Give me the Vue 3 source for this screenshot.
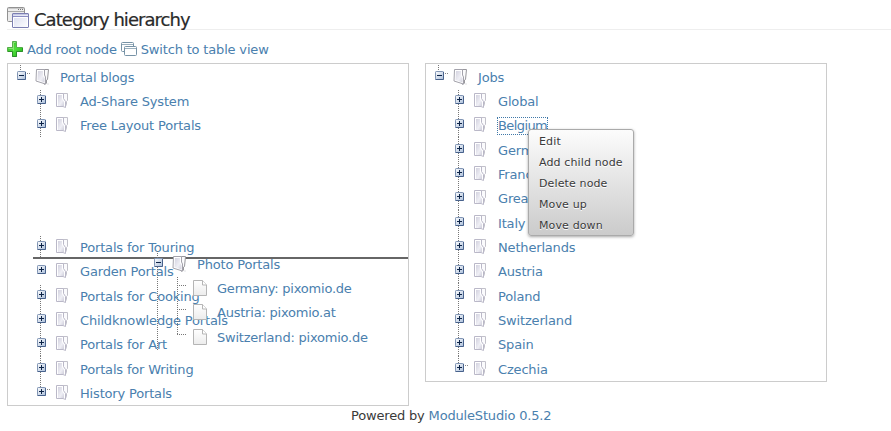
<script setup>
const left = [
  { text: 'Portal blogs', root: true },
  { text: 'Ad-Share System', start: true },
  { text: 'Free Layout Portals' },
  { blank: true },
  { blank: true },
  { blank: true },
  { blank: true },
  { text: 'Portals for Touring', start: true },
  { text: 'Garden Portals', noline: true },
  { text: 'Portals for Cooking', start: true },
  { text: 'Childknowledge Portals' },
  { text: 'Portals for Art' },
  { text: 'Portals for Writing' },
  { text: 'History Portals', last: true },
]
const right = [
  { text: 'Jobs', root: true },
  { text: 'Global', start: true },
  { text: 'Belgium', focused: true },
  { text: 'Germany' },
  { text: 'France' },
  { text: 'Great Britain' },
  { text: 'Italy' },
  { text: 'Netherlands' },
  { text: 'Austria' },
  { text: 'Poland' },
  { text: 'Switzerland' },
  { text: 'Spain' },
  { text: 'Czechia', last: true },
]
const panels = [left, right]
const dragged = ['Germany: pixomio.de', 'Austria: pixomio.at', 'Switzerland: pixomio.de']
const actions = ['Edit', 'Add child node', 'Delete node', 'Move up', 'Move down']
</script>

<template>
  <div class="page">
    <svg class="defs" width="0" height="0">
      <defs>
        <linearGradient id="paper" x1="0" y1="0" x2="1" y2="1">
          <stop offset="0" stop-color="#d3d2df" />
          <stop offset="0.6" stop-color="#efeff5" />
          <stop offset="1" stop-color="#cfcedb" />
        </linearGradient>
        <linearGradient id="leaf" x1="0" y1="0" x2="0" y2="1">
          <stop offset="0" stop-color="#ffffff" />
          <stop offset="1" stop-color="#ececec" />
        </linearGradient>
        <linearGradient id="tog" x1="0" y1="0" x2="1" y2="1">
          <stop offset="0" stop-color="#ffffff" />
          <stop offset="1" stop-color="#a9bdd9" />
        </linearGradient>
        <linearGradient id="green" x1="0" y1="0" x2="1" y2="1">
          <stop offset="0" stop-color="#2fae2a" />
          <stop offset="0.5" stop-color="#4fe03a" />
          <stop offset="1" stop-color="#1fae1c" />
        </linearGradient>
        <linearGradient id="win" x1="0" y1="0" x2="1" y2="1">
          <stop offset="0" stop-color="#d5d9ee" />
          <stop offset="1" stop-color="#ffffff" />
        </linearGradient>
        <symbol id="i-folder" viewBox="0 0 15 16">
          <path d="M7 .5H12.500V7.500L11.500 8.500V11.500L10 14" fill="#fbfbfd" stroke="#c2c1ca" />
          <path d="M1.500 .5H8.500V5.500L10.500 8.500V14.500L8 13.500H1.500Z" fill="#fff" stroke="#bab8c8" />
          <path d="M3 2H7V6L9 9V13H3Z" fill="url(#paper)" />
        </symbol>
        <symbol id="i-folder-root" viewBox="0 0 15 16">
          <path d="M3 .5H13.500L12.500 10.500L11.500 11V14L10 15.500L7 13" fill="#fbfbfc" stroke="#98979c" />
          <path d="M1.500 .5H9.500V6L10.500 8V15L1 12Z" fill="#fff" stroke="#a3a2ab" />
          <path d="M3 2H8V7L9.500 9V13.500L2.500 11Z" fill="url(#paper)" />
          <path d="M12 15H14" stroke="#e2e2e5" />
        </symbol>
        <symbol id="i-leaf" viewBox="0 0 15 16">
          <path d="M.5 .5H9.500L13.500 5V15.500H.5Z" fill="url(#leaf)" stroke="#b5b5b5" />
          <path d="M9.500 .5V5H13.500" fill="#fff" stroke="#b5b5b5" />
        </symbol>
        <symbol id="i-plus" viewBox="0 0 9 9">
          <rect x=".5" y=".5" width="8" height="8" rx=".7" fill="url(#tog)" stroke="#8195b4" />
          <path d="M.5 8.500H8.500V1" fill="none" stroke="#48628c" />
          <path d="M2 4.500H7M4.500 2V7" stroke="#0c2347" />
        </symbol>
        <symbol id="i-minus" viewBox="0 0 9 9">
          <rect x=".5" y=".5" width="8" height="8" rx=".7" fill="url(#tog)" stroke="#8195b4" />
          <path d="M.5 8.500H8.500V1" fill="none" stroke="#48628c" />
          <path d="M2 4.500H7" stroke="#0c2347" />
        </symbol>
      </defs>
    </svg>

    <header class="head">
      <svg class="logo" width="22" height="22" viewBox="0 0 22 22">
        <rect x=".5" y=".5" width="17" height="14" rx="1" fill="#ededed" stroke="#929292" />
        <path d="M1 1.500H17" stroke="#c9c9c9" />
        <path d="M1 4.500H17" stroke="#a9a9a9" />
        <path d="M11 2.500H12M13 2.500H14M15 2.500H16" stroke="#777" />
        <rect x="5.500" y="6.500" width="16" height="14" rx=".5" fill="url(#win)" stroke="#7c7fb2" />
        <path d="M6 7.500H21" stroke="#c5c8e4" />
        <path d="M6 9.500H21" stroke="#8b8dc4" />
        <path d="M6.500 20V10.500H20.500V20" fill="none" stroke="#fff" />
      </svg>
      <h1>Category hierarchy</h1>
    </header>

    <nav class="tools">
      <svg class="add" width="16" height="16" viewBox="0 0 16 16">
        <path d="M5.500 .5H9.500V6.500H15.500V10.500H9.500V15.500H5.500V10.500H.5V6.500H5.500Z" fill="url(#green)" stroke="#55ad4a" />
        <path d="M6.500 9.500V1.500H8.500M1.500 7.500H6" fill="none" stroke="#8be374" />
        <path d="M1 10.500H5.500V15.500H9.500V10.500H15.500V7" fill="none" stroke="#2c8f2a" />
      </svg>
      <a>Add root node</a>
      <svg class="switch" width="16" height="14" viewBox="0 0 16 14">
        <path d="M3.500 9.500H1.500Q.5 9.500 .5 8.500V1.500Q.5 .5 1.500 .5H11.500Q12.500 .5 12.500 1.500V4" fill="#fff" stroke="#7793a6" />
        <path d="M1 2.500H12" stroke="#9bb0be" />
        <rect x="3.500" y="4.500" width="12" height="9" rx="1" fill="#fff" stroke="#7793a6" />
        <path d="M4 6.500H15" stroke="#9bb0be" />
      </svg>
      <a>Switch to table view</a>
    </nav>

    <main class="panels">
      <section v-for="(rows, p) in panels" :key="p" class="panel">
        <div
          v-for="(r, i) in rows"
          :key="i"
          class="row"
          :class="{ root: r.root, last: r.last, start: r.start, lined: !r.root && !r.blank && !r.noline && !r.last }"
        >
          <template v-if="!r.blank">
            <svg class="toggle" width="9" height="9"><use :href="r.root ? '#i-minus' : '#i-plus'" /></svg>
            <i class="stub"></i>
            <svg class="folder" width="15" height="16"><use :href="r.root ? '#i-folder-root' : '#i-folder'" /></svg>
            <a :class="{ focused: r.focused }">{{ r.text }}</a>
          </template>
        </div>
      </section>
    </main>

    <footer>Powered by <a>ModuleStudio 0.5.2</a></footer>

    <div class="dropline"></div>

    <div class="drag">
      <div class="row dragroot">
        <svg class="toggle" width="9" height="9"><use href="#i-minus" /></svg>
        <i class="stub"></i>
        <svg class="folder" width="15" height="16"><use href="#i-folder-root" /></svg>
        <a>Photo Portals</a>
      </div>
      <div class="kids">
        <div v-for="(k, i) in dragged" :key="i" class="kid">
          <i class="branch"></i>
          <svg class="leaf" width="15" height="16"><use href="#i-leaf" /></svg>
          <a>{{ k }}</a>
        </div>
      </div>
    </div>

    <ul class="menu">
      <li v-for="a in actions" :key="a">{{ a }}</li>
    </ul>
  </div>
</template>

<style>
html, body { margin: 0; background: #fff; overflow: hidden; }
</style>

<style scoped>
.page {
  position: relative;
  box-sizing: border-box;
  width: 891px;
  height: 431px;
  padding: 7px 0 0 7px;
  font: 13px/18px "DejaVu Sans", sans-serif;
  letter-spacing: -0.17px;
  color: #3a3a3a;
}
.defs { position: absolute; }
a { color: #4a80ae; white-space: nowrap; }
svg { display: block; flex: none; }
.head { display: flex; height: 22px; border-bottom: 1px solid #eee; }
h1 {
  margin: 2px 0 0 5px;
  font-size: 18px;
  line-height: 22px;
  font-weight: 400;
  letter-spacing: -0.95px;
  color: #2a2a2a;
  -webkit-text-stroke: 0.2px #2a2a2a;
  white-space: nowrap;
}
.tools { display: flex; height: 33px; padding-top: 11px; box-sizing: border-box; }
.add { margin-right: 4px; }
.switch { margin: 1px 4px 0 4px; }
.panels { display: flex; gap: 16px; align-items: flex-start; height: 344px; }
.panel { width: 400px; border: 1px solid #ccc; padding-bottom: 1px; }
.row {
  display: flex;
  height: 24px;
  padding-left: 29px;
  box-sizing: border-box;
  background-repeat: no-repeat;
  background-image: none;
}
.panel .row:nth-child(3n) { height: 25px; }
.row.root {
  padding-left: 9px;
  background-image: repeating-linear-gradient(#777 0 1px, transparent 1px 2px);
  background-size: 1px 8px;
  background-position: 12px 1px;
}
.lined, .last {
  background-image: repeating-linear-gradient(#777 0 1px, transparent 1px 2px);
  background-size: 1px 100%;
  background-position: 32px 0;
}
.start { background-position: 32px 2px; }
.last { background-size: 1px 10px; }
.toggle { margin-top: 7px; }
.stub { width: 4px; height: 1px; margin-top: 9px; }
.root .stub, .last .stub { background: repeating-linear-gradient(90deg, transparent 0 1px, #888 1px 2px); }
.folder { margin: 5px 10px 0 5px; }
.row a { margin-top: 5px; height: 18px; }
.row a.focused {
  box-sizing: border-box;
  width: 51px;
  margin-left: -1px;
  border: 1px dotted #4078a8;
  line-height: 16px;
  letter-spacing: -0.6px;
}
footer { padding-left: 344px; white-space: nowrap; }
.dropline {
  position: absolute;
  left: 33px;
  top: 257px;
  width: 375px;
  height: 2px;
  background: #666;
}
.drag {
  position: absolute;
  left: 154px;
  top: 251px;
  height: 99px;
  background: repeating-linear-gradient(#777 0 1px, transparent 1px 2px) no-repeat 3px 0 / 1px 100%;
}
.dragroot { padding-left: 0; height: 26px; }
.kids {
  margin-left: 23px;
  background: repeating-linear-gradient(#777 0 1px, transparent 1px 2px) no-repeat 0 0 / 1px 57px;
}
.kid { display: flex; height: 24px; }
.kid:nth-child(2) { height: 25px; }
.branch {
  width: 9px;
  height: 1px;
  margin-top: 8px;
  background: repeating-linear-gradient(90deg, #777 0 1px, transparent 1px 2px);
}
.leaf { margin: 3px 9px 0 7px; }
.kid a { margin-top: 3px; letter-spacing: -0.22px; }
.menu {
  position: absolute;
  left: 528px;
  top: 129px;
  width: 106px;
  height: 107px;
  box-sizing: border-box;
  margin: 0;
  padding: 1px 0 0 10px;
  list-style: none;
  border: 1px solid #aaa;
  border-radius: 3px;
  background: linear-gradient(#fcfcfc, #cbcbcb);
  box-shadow: 0 1px 3px rgba(0, 0, 0, 0.35);
  font-size: 11px;
  line-height: 21px;
  letter-spacing: 0.13px;
  color: #3a3a3a;
  text-shadow: 0 1px 0 #fff;
}
.menu li { height: 21px; white-space: nowrap; }
</style>
